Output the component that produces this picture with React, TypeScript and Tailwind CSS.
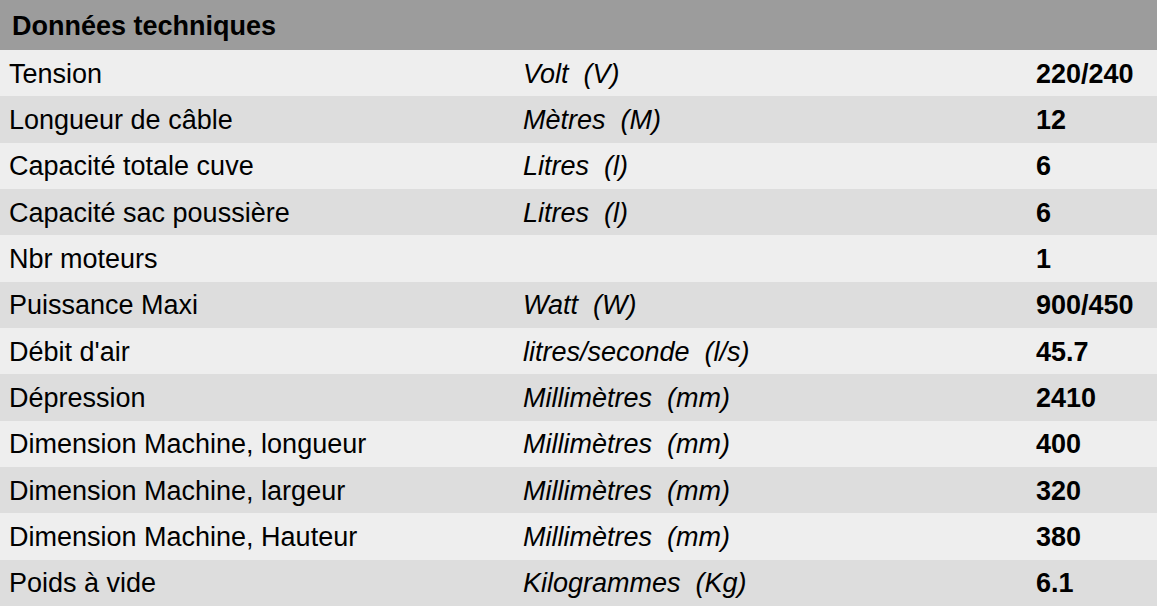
const rows: [string, string, string][] = [
  ["Tension", "Volt  (V)", "220/240"],
  ["Longueur de câble", "Mètres  (M)", "12"],
  ["Capacité totale cuve", "Litres  (l)", "6"],
  ["Capacité sac poussière", "Litres  (l)", "6"],
  ["Nbr moteurs", "", "1"],
  ["Puissance Maxi", "Watt  (W)", "900/450"],
  ["Débit d'air", "litres/seconde  (l/s)", "45.7"],
  ["Dépression", "Millimètres  (mm)", "2410"],
  ["Dimension Machine, longueur", "Millimètres  (mm)", "400"],
  ["Dimension Machine, largeur", "Millimètres  (mm)", "320"],
  ["Dimension Machine, Hauteur", "Millimètres  (mm)", "380"],
  ["Poids à vide", "Kilogrammes  (Kg)", "6.1"],
];

export default function App() {
  return (
    <div className="w-[1157px] h-[606px] flex flex-col bg-white text-black font-['Liberation_Sans',Arial,sans-serif] text-[27px] leading-none">
      {/* header */}
      <div className="h-[50px] shrink-0 bg-[#9c9c9c] flex items-center pl-[12px] pt-[3px] font-bold">
        Données techniques
      </div>

      {/* spec rows */}
      <div className="flex-1 flex flex-col">
        {rows.map(([label, unit, value], i) => (
          <div
            key={label}
            className={
              "flex-1 flex items-center pt-[2px] " + (i % 2 === 0 ? "bg-[#eeeeee]" : "bg-[#dddddd]")
            }
          >
            <div className="w-[523px] pl-[9px]">{label}</div>
            <div className="w-[513px] italic whitespace-pre">{unit}</div>
            <div className="font-bold">{value}</div>
          </div>
        ))}
      </div>
    </div>
  );
}
